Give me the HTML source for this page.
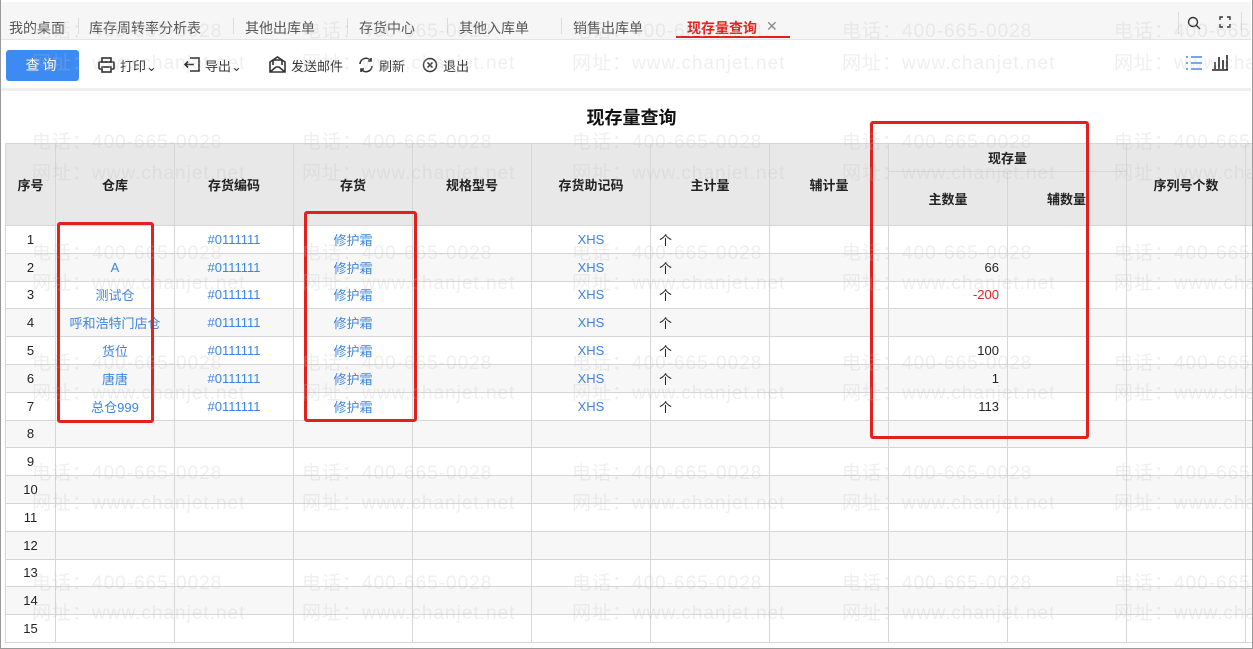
<!DOCTYPE html>
<html><head><meta charset="utf-8"><style>
*{margin:0;padding:0;box-sizing:border-box}
body{width:1253px;height:649px;overflow:hidden;background:#fff;font-family:"Liberation Sans","Noto Sans CJK SC",sans-serif;position:relative;font-size:13px;color:#222}
.frame{position:absolute;left:0;top:0;width:1253px;height:649px;border:1px solid #999;border-top:none}
.tabs{position:absolute;left:1px;top:2px;width:1250px;height:38px;background:#f6f6f6;border-bottom:1px solid #e4e4e4}
.tab{position:absolute;top:16px;font-size:14px;color:#555}
.sep{position:absolute;top:16px;width:1px;height:16px;background:#ddd}
.tb{position:absolute;left:1px;top:41px;width:1250px;height:50px;background:#fff;border-bottom:3px solid #eee}
.btn{position:absolute;left:5px;top:9px;width:73px;height:31px;background:#3d8af2;border-radius:3px;color:#fff;font-size:14px;text-align:center;line-height:31px;letter-spacing:3px}
.ti{position:absolute;top:15px;font-size:13px;color:#333}
.title{position:absolute;left:0;width:1253px;top:104px;text-align:center;font-size:18px;font-weight:bold;color:#111;padding-left:10px}
table{position:absolute;left:5px;top:143px;border-collapse:collapse;table-layout:fixed;width:1260px}
td,th{border:1px solid #d6d6d6;text-align:center;font-size:13px;height:27.8px;padding:0;overflow:hidden;white-space:nowrap}
th{background:#e8e8e8;font-weight:bold;color:#222}
tr.e td{background:#f7f7f7}
.b{color:#3c84e0}
.r{text-align:right;padding-right:8px}
th.r{padding-right:40px}
.l{text-align:left;padding-left:8px}
.wm{position:absolute;color:rgba(190,190,190,0.25);font-size:19px;white-space:nowrap;letter-spacing:1px}
.box{position:absolute;border:3px solid #e3201b;border-radius:3px}
</style></head><body>
<div class="tabs">
<span class="tab" style="left:8px">我的桌面</span><span class="sep" style="left:77px"></span>
<span class="tab" style="left:88px">库存周转率分析表</span><span class="sep" style="left:232px"></span>
<span class="tab" style="left:244px">其他出库单</span><span class="sep" style="left:346px"></span>
<span class="tab" style="left:358px">存货中心</span><span class="sep" style="left:446px"></span>
<span class="tab" style="left:458px">其他入库单</span><span class="sep" style="left:560px"></span>
<span class="tab" style="left:572px">销售出库单</span>
<span class="tab" style="left:686px;color:#e3201b;font-weight:bold">现存量查询</span><span class="tab" style="left:765px;color:#888">✕</span>
<div style="position:absolute;left:675px;top:34px;width:114px;height:2px;background:#e3201b"></div>
<span class="sep" style="left:1177px;top:10px;height:22px"></span>
<svg style="position:absolute;left:1186px;top:14px" width="14" height="14"><circle cx="6" cy="6" r="4.5" fill="none" stroke="#333" stroke-width="1.4"/><line x1="9.5" y1="9.5" x2="13" y2="13" stroke="#333" stroke-width="1.4"/></svg>
<svg style="position:absolute;left:1218px;top:14px" width="12" height="12" fill="none" stroke="#333" stroke-width="1.4"><path d="M1 4V1h3M8 1h3v3M11 8v3H8M4 11H1V8"/></svg>
<span class="sep" style="left:1240px;top:10px;height:22px"></span>
</div>
<div class="tb">
<div class="btn">查询</div>
<svg style="position:absolute;left:97px;top:16px" width="17" height="16" fill="none" stroke="#333" stroke-width="1.6"><rect x="4" y="1" width="9" height="4"/><rect x="1" y="5" width="15" height="7" rx="1"/><rect x="4" y="10" width="9" height="5" fill="#fff"/></svg>
<span class="ti" style="left:119px">打印⌄</span>
<svg style="position:absolute;left:183px;top:15px" width="17" height="17" fill="none" stroke="#333" stroke-width="1.6"><path d="M6 2h9v13H6M1 8.5h9M4 5.5l-3 3 3 3"/></svg>
<span class="ti" style="left:204px">导出⌄</span>
<svg style="position:absolute;left:268px;top:15px" width="17" height="17" fill="none" stroke="#333" stroke-width="1.6"><path d="M1 6l7.5-5 7.5 5v10H1zM1 16l6-5h3l6 5M4 4v5M13 4v5M4 4h9"/></svg>
<span class="ti" style="left:290px">发送邮件</span>
<svg style="position:absolute;left:357px;top:16px" width="16" height="16" fill="none" stroke="#333" stroke-width="1.6"><path d="M2 7a6 6 0 0 1 11-3M14 9a6 6 0 0 1-11 3"/><path d="M13 1v3h-3M3 15v-3h3"/></svg>
<span class="ti" style="left:378px">刷新</span>
<svg style="position:absolute;left:421px;top:16px" width="16" height="16" fill="none" stroke="#333" stroke-width="1.5"><circle cx="8" cy="8" r="6.5"/><path d="M5.5 5.5l5 5M10.5 5.5l-5 5"/></svg>
<span class="ti" style="left:442px">退出</span>
<svg style="position:absolute;left:1184px;top:14px" width="18" height="16" stroke="#3d8af2" stroke-width="1.6"><path d="M1 2h2M6 2h11M1 8h2M6 8h11M1 14h2M6 14h11"/></svg>
<svg style="position:absolute;left:1210px;top:13px" width="18" height="17" fill="none" stroke="#222" stroke-width="1.6"><path d="M1 16h16M4 8v7M8 3v12M12 6v9M16 1v15"/></svg>
</div>
<div class="title">现存量查询</div>
<table>
<colgroup><col style="width:50px"><col style="width:119px"><col style="width:119px"><col style="width:119px"><col style="width:119px"><col style="width:119px"><col style="width:119px"><col style="width:119px"><col style="width:119px"><col style="width:119px"><col style="width:119px"><col style="width:20px"></colgroup>
<tr style="height:28px"><th rowspan="2">序号</th><th rowspan="2">仓库</th><th rowspan="2">存货编码</th><th rowspan="2">存货</th><th rowspan="2">规格型号</th><th rowspan="2">存货助记码</th><th rowspan="2">主计量</th><th rowspan="2">辅计量</th><th colspan="2">现存量</th><th rowspan="2">序列号个数</th><th rowspan="2"></th></tr>
<tr style="height:54px"><th>主数量</th><th class="r">辅数量</th></tr>
<tr><td>1</td><td></td><td class="b">#0111111</td><td class="b">修护霜</td><td></td><td class="b">XHS</td><td class="l">个</td><td></td><td></td><td></td><td></td><td></td></tr>
<tr class="e"><td>2</td><td class="b">A</td><td class="b">#0111111</td><td class="b">修护霜</td><td></td><td class="b">XHS</td><td class="l">个</td><td></td><td class="r">66</td><td></td><td></td><td></td></tr>
<tr><td>3</td><td class="b">测试仓</td><td class="b">#0111111</td><td class="b">修护霜</td><td></td><td class="b">XHS</td><td class="l">个</td><td></td><td class="r" style="color:#e3201b">-200</td><td></td><td></td><td></td></tr>
<tr class="e"><td>4</td><td class="b">呼和浩特门店仓</td><td class="b">#0111111</td><td class="b">修护霜</td><td></td><td class="b">XHS</td><td class="l">个</td><td></td><td></td><td></td><td></td><td></td></tr>
<tr><td>5</td><td class="b">货位</td><td class="b">#0111111</td><td class="b">修护霜</td><td></td><td class="b">XHS</td><td class="l">个</td><td></td><td class="r">100</td><td></td><td></td><td></td></tr>
<tr class="e"><td>6</td><td class="b">唐唐</td><td class="b">#0111111</td><td class="b">修护霜</td><td></td><td class="b">XHS</td><td class="l">个</td><td></td><td class="r">1</td><td></td><td></td><td></td></tr>
<tr><td>7</td><td class="b">总仓999</td><td class="b">#0111111</td><td class="b">修护霜</td><td></td><td class="b">XHS</td><td class="l">个</td><td></td><td class="r">113</td><td></td><td></td><td></td></tr>
<tr class="e"><td>8</td><td></td><td></td><td></td><td></td><td></td><td></td><td></td><td></td><td></td><td></td><td></td></tr>
<tr><td>9</td><td></td><td></td><td></td><td></td><td></td><td></td><td></td><td></td><td></td><td></td><td></td></tr>
<tr class="e"><td>10</td><td></td><td></td><td></td><td></td><td></td><td></td><td></td><td></td><td></td><td></td><td></td></tr>
<tr><td>11</td><td></td><td></td><td></td><td></td><td></td><td></td><td></td><td></td><td></td><td></td><td></td></tr>
<tr class="e"><td>12</td><td></td><td></td><td></td><td></td><td></td><td></td><td></td><td></td><td></td><td></td><td></td></tr>
<tr><td>13</td><td></td><td></td><td></td><td></td><td></td><td></td><td></td><td></td><td></td><td></td><td></td></tr>
<tr class="e"><td>14</td><td></td><td></td><td></td><td></td><td></td><td></td><td></td><td></td><td></td><td></td><td></td></tr>
<tr><td>15</td><td></td><td></td><td></td><td></td><td></td><td></td><td></td><td></td><td></td><td></td><td></td></tr>
</table>
<div class="box" style="left:57px;top:222px;width:97px;height:201px"></div>
<div class="box" style="left:304px;top:211px;width:113px;height:211px"></div>
<div class="box" style="left:870px;top:121px;width:219px;height:318px"></div>
<div class="frame"></div>
<div style="position:absolute;left:0;top:0">
<span class="wm" style="left:32px;top:16px">电话：400-665-0028</span><span class="wm" style="left:302px;top:16px">电话：400-665-0028</span><span class="wm" style="left:572px;top:16px">电话：400-665-0028</span><span class="wm" style="left:842px;top:16px">电话：400-665-0028</span><span class="wm" style="left:1114px;top:16px">电话：400-665-0028</span>
<span class="wm" style="left:32px;top:48px">网址：www.chanjet.net</span><span class="wm" style="left:302px;top:48px">网址：www.chanjet.net</span><span class="wm" style="left:572px;top:48px">网址：www.chanjet.net</span><span class="wm" style="left:842px;top:48px">网址：www.chanjet.net</span><span class="wm" style="left:1114px;top:48px">网址：www.chanjet.net</span>
<span class="wm" style="left:32px;top:127px">电话：400-665-0028</span><span class="wm" style="left:302px;top:127px">电话：400-665-0028</span><span class="wm" style="left:572px;top:127px">电话：400-665-0028</span><span class="wm" style="left:842px;top:127px">电话：400-665-0028</span><span class="wm" style="left:1114px;top:127px">电话：400-665-0028</span>
<span class="wm" style="left:32px;top:158px">网址：www.chanjet.net</span><span class="wm" style="left:302px;top:158px">网址：www.chanjet.net</span><span class="wm" style="left:572px;top:158px">网址：www.chanjet.net</span><span class="wm" style="left:842px;top:158px">网址：www.chanjet.net</span><span class="wm" style="left:1114px;top:158px">网址：www.chanjet.net</span>
<span class="wm" style="left:32px;top:238px">电话：400-665-0028</span><span class="wm" style="left:302px;top:238px">电话：400-665-0028</span><span class="wm" style="left:572px;top:238px">电话：400-665-0028</span><span class="wm" style="left:842px;top:238px">电话：400-665-0028</span><span class="wm" style="left:1114px;top:238px">电话：400-665-0028</span>
<span class="wm" style="left:32px;top:268px">网址：www.chanjet.net</span><span class="wm" style="left:302px;top:268px">网址：www.chanjet.net</span><span class="wm" style="left:572px;top:268px">网址：www.chanjet.net</span><span class="wm" style="left:842px;top:268px">网址：www.chanjet.net</span><span class="wm" style="left:1114px;top:268px">网址：www.chanjet.net</span>
<span class="wm" style="left:32px;top:348px">电话：400-665-0028</span><span class="wm" style="left:302px;top:348px">电话：400-665-0028</span><span class="wm" style="left:572px;top:348px">电话：400-665-0028</span><span class="wm" style="left:842px;top:348px">电话：400-665-0028</span><span class="wm" style="left:1114px;top:348px">电话：400-665-0028</span>
<span class="wm" style="left:32px;top:378px">网址：www.chanjet.net</span><span class="wm" style="left:302px;top:378px">网址：www.chanjet.net</span><span class="wm" style="left:572px;top:378px">网址：www.chanjet.net</span><span class="wm" style="left:842px;top:378px">网址：www.chanjet.net</span><span class="wm" style="left:1114px;top:378px">网址：www.chanjet.net</span>
<span class="wm" style="left:32px;top:458px">电话：400-665-0028</span><span class="wm" style="left:302px;top:458px">电话：400-665-0028</span><span class="wm" style="left:572px;top:458px">电话：400-665-0028</span><span class="wm" style="left:842px;top:458px">电话：400-665-0028</span><span class="wm" style="left:1114px;top:458px">电话：400-665-0028</span>
<span class="wm" style="left:32px;top:488px">网址：www.chanjet.net</span><span class="wm" style="left:302px;top:488px">网址：www.chanjet.net</span><span class="wm" style="left:572px;top:488px">网址：www.chanjet.net</span><span class="wm" style="left:842px;top:488px">网址：www.chanjet.net</span><span class="wm" style="left:1114px;top:488px">网址：www.chanjet.net</span>
<span class="wm" style="left:32px;top:568px">电话：400-665-0028</span><span class="wm" style="left:302px;top:568px">电话：400-665-0028</span><span class="wm" style="left:572px;top:568px">电话：400-665-0028</span><span class="wm" style="left:842px;top:568px">电话：400-665-0028</span><span class="wm" style="left:1114px;top:568px">电话：400-665-0028</span>
<span class="wm" style="left:32px;top:598px">网址：www.chanjet.net</span><span class="wm" style="left:302px;top:598px">网址：www.chanjet.net</span><span class="wm" style="left:572px;top:598px">网址：www.chanjet.net</span><span class="wm" style="left:842px;top:598px">网址：www.chanjet.net</span><span class="wm" style="left:1114px;top:598px">网址：www.chanjet.net</span>
</div>
</body></html>
